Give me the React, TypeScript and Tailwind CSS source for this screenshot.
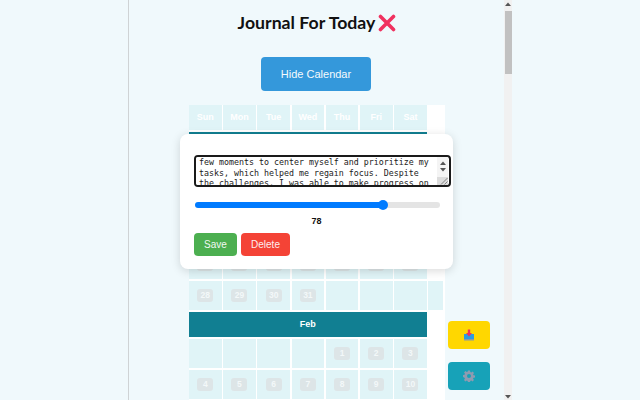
import React, { useEffect, useRef } from "react";

const days = ["Sun", "Mon", "Tue", "Wed", "Thu", "Fri", "Sat"];

const text =
  "overwhelmed by everything on my list. I took a\nfew moments to center myself and prioritize my\ntasks, which helped me regain focus. Despite\nthe challenges, I was able to make progress on\nthe report and finish early.";

function monthCells(offset: number, count: number) {
  const cells: (number | null)[] = [];
  for (let i = 0; i < offset; i++) cells.push(null);
  for (let i = 1; i <= count; i++) cells.push(i);
  return cells;
}

function Cell({ n }: { n: number | null }) {
  return (
    <div className="h-[29px] bg-[#e0f4f7] flex items-center justify-center">
      {n !== null && (
        <span className="min-w-[16px] h-[13px] px-[3px] rounded-[3px] bg-[#dde5e7] text-[#f3f8f9] text-[8.5px] font-bold leading-[13px] text-center">
          {n}
        </span>
      )}
    </div>
  );
}

function MonthBar({ label }: { label: string }) {
  return (
    <div className="col-span-7 h-[24.5px] bg-[#117f92] text-white text-[9px] font-bold flex items-center justify-center">
      {label}
    </div>
  );
}

function Arrow({ up, color = "#555" }: { up: boolean; color?: string }) {
  return (
    <svg width="8" height="5" viewBox="0 0 8 5" className="shrink-0">
      <path d={up ? "M4 0.5 L7 4 L1 4 Z" : "M1 1 L7 1 L4 4.5 Z"} fill={color} />
    </svg>
  );
}

export default function App() {
  const ta = useRef<HTMLTextAreaElement>(null);
  useEffect(() => {
    if (ta.current) ta.current.scrollTop = 10;
  }, []);

  const jan = monthCells(1, 31);
  const feb = monthCells(4, 29);

  return (
    <div className="w-[640px] h-[400px] overflow-hidden flex bg-[#f0f9fc] font-['Liberation_Sans',sans-serif]">
      <div className="w-[129px] shrink-0 border-r border-[#cfd3d5]" />
      <main className="relative w-[375px] shrink-0 h-[400px] overflow-hidden">
        <h1 className="mt-[11px] h-[24px] flex items-center justify-center gap-[3px] text-[17.7px] leading-[24px] font-bold text-[#111] font-['Lato',sans-serif] pl-[1px]">
          <span>Journal For Today</span>
          <svg width="18" height="18" viewBox="0 0 18 18" className="shrink-0">
            <path d="M2.500 2.500 L15.500 15.500 M15.500 2.500 L2.500 15.500" stroke="#f0315f" strokeWidth="3.6" strokeLinecap="round" />
          </svg>
        </h1>
        <button className="block mt-[22px] ml-[132px] w-[110px] h-[34px] rounded-[4px] bg-[#3498db] text-[#f4fafd] text-[11px]">
          Hide Calendar
        </button>
        <section className="mt-[14px] ml-[60px] w-[256px] bg-white">
          <div className="grid grid-cols-[repeat(7,32.6px)_15px] gap-x-[1.6px] gap-y-[2px]">
            {days.map((d) => (
              <div key={d} className="h-[25px] bg-[#e0f4f7] text-white text-[9px] font-bold flex items-center justify-center">
                {d}
              </div>
            ))}
            <div />
            <div className="col-span-7 h-[23px] bg-[#117f92] text-white text-[9px] font-bold flex items-center justify-center">Jan</div>
            <div />
            {jan.map((n, i) => (
              <React.Fragment key={i}>
                <Cell n={n} />
                {i % 7 === 6 && <div />}
              </React.Fragment>
            ))}
            <Cell n={null} />
            <Cell n={null} />
            <Cell n={null} />
            <div className="h-[29px] bg-[#e0f4f7]" />
            <MonthBar label="Feb" />
            <div />
            {feb.map((n, i) => (
              <React.Fragment key={i}>
                <Cell n={n} />
                {i % 7 === 6 && <div />}
              </React.Fragment>
            ))}
          </div>
        </section>

        <div className="absolute left-[51px] top-[134px] w-[273px] h-[135px] bg-white rounded-[8px] shadow-[0_2px_10px_rgba(0,0,0,0.15)] pt-[21px] pl-[14px]">
          <div className="flex w-[257px] h-[32px] border-2 border-[#1a1a1a] rounded-[4px] overflow-hidden bg-white">
            <textarea
              ref={ta}
              readOnly
              wrap="off"
              defaultValue={text}
              className="flex-1 min-w-0 h-full border-0 pl-[3px] pr-0 py-0 bg-white text-[8.3px] leading-[10.4px] text-[#222] font-['DejaVu_Sans_Mono',monospace] resize-none outline-none overflow-hidden"
            />
            <div className="w-[11px] mr-[1px] shrink-0 flex flex-col items-center bg-[#f4f4f4]">
              <div className="h-[10px] flex items-end"><Arrow up /></div>
              <div className="h-[9px] flex items-center"><Arrow up={false} /></div>
              <div className="mt-[3px] w-full flex-1 bg-[#dcdcdc] flex items-end justify-end">
                <svg width="8" height="8" viewBox="0 0 8 8">
                  <path d="M7.500 1 L1 7.500 M7.500 4.500 L4.500 7.500" stroke="#777" strokeWidth="0.9" />
                </svg>
              </div>
            </div>
          </div>
          <input
            type="range"
            readOnly
            value={78}
            min={0}
            max={100}
            style={{ background: "linear-gradient(to right, #007bff 77%, #e4e4e4 77%)" }}
            className="block mt-[15px] ml-[1px] w-[245px] h-[6px] rounded-full appearance-none [&::-webkit-slider-thumb]:appearance-none [&::-webkit-slider-thumb]:w-[10px] [&::-webkit-slider-thumb]:h-[10px] [&::-webkit-slider-thumb]:rounded-full [&::-webkit-slider-thumb]:bg-[#007bff]"
          />
          <div className="mt-[7px] w-[245px] text-center text-[9px] leading-[12px] font-bold text-[#111]">78</div>
          <div className="mt-[6px] flex gap-[4px]">
            <button className="w-[43px] h-[23px] rounded-[4px] bg-[#4caf50] text-[#f0f8f0] text-[10px]">Save</button>
            <button className="w-[49px] h-[23px] rounded-[4px] bg-[#f44336] text-[#fdeeee] text-[10px]">Delete</button>
          </div>
        </div>

        <button className="absolute left-[319px] top-[321px] w-[42px] h-[28px] rounded-[4px] bg-[#ffd700] flex items-center justify-center">
          <svg width="12" height="12" viewBox="0 0 12 12">
            <rect x="1" y="5" width="10" height="5" fill="#2f9be0" />
            <rect x="1" y="10" width="10" height="1.500" fill="#8a9aa5" />
            <path d="M4.800 0.500 H7.200 V4 H9 L6 7.500 L3 4 H4.800 Z" fill="#f0315f" />
          </svg>
        </button>
        <button className="absolute left-[319px] top-[362px] w-[42px] h-[28px] rounded-[4px] bg-[#17a2b8] flex items-center justify-center">
          <svg width="12" height="12" viewBox="0 0 24 24">
            <path
              fillRule="evenodd"
              fill="#8f9bb0"
              d="M10 1h4l.6 3.100 2 .8 2.600-1.800 2.800 2.800-1.800 2.600.8 2 3 .5v4l-3.100.6-.8 2 1.800 2.600-2.800 2.800-2.600-1.800-2 .8-.5 3h-4l-.6-3.100-2-.8-2.600 1.800-2.800-2.800 1.800-2.600-.8-2L0 14v-4l3.100-.6.8-2L2.100 4.800l2.800-2.800 2.600 1.800 2-.8zM12 8a4 4 0 1 0 0 8 4 4 0 0 0 0-8z"
            />
          </svg>
        </button>
      </main>
      <div className="w-[8px] shrink-0 h-[400px] bg-[#f1f1f1] flex flex-col items-center">
        <div className="h-[8px] flex items-center"><Arrow up /></div>
        <div className="mt-[3px] w-[7px] h-[63px] bg-[#c1c1c1]" />
        <div className="flex-1" />
        <div className="h-[8px] flex items-center"><Arrow up={false} /></div>
      </div>
      <div className="flex-1" />
    </div>
  );
}
